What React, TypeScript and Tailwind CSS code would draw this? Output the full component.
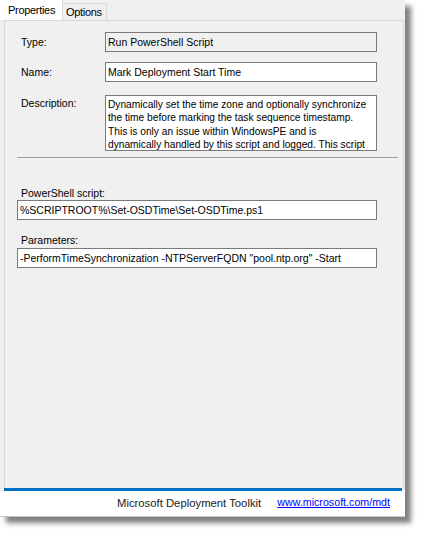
const Field = ({ children, className = '' }: { children: React.ReactNode; className?: string }) => (
  <div
    className={`h-[20px] border border-[#7a7a7a] pl-[2px] leading-[18px] whitespace-nowrap overflow-hidden ${className}`}
  >
    {children}
  </div>
);

const descriptionLines = [
  'Dynamically set the time zone and optionally synchronize',
  'the time before marking the task sequence timestamp.',
  'This is only an issue within WindowsPE and is',
  'dynamically handled by this script and logged. This script',
];

export default function App() {
  return (
    <div className="w-[421px] h-[533px] bg-white font-['Liberation_Sans',Arial,sans-serif] text-[10.5px] text-black">
      <div className="w-[405px] h-[517px] bg-[#f0f0f0] flex flex-col shadow-[6px_6px_5px_rgba(0,0,0,0.5)]">
        {/* tab strip */}
        <div className="h-[20px] flex items-end shrink-0">
          <div className="h-[20px] w-[63px] bg-white border-r border-[#d9d9d9] pl-[8px] text-[11px] tracking-[-0.3px] leading-[20px]">
            Properties
          </div>
          <div className="h-[17px] w-[44px] border-t border-r border-[#d9d9d9] pl-[3px] text-[11px] tracking-[-0.3px] leading-[17px]">
            Options
          </div>
        </div>

        {/* tab page */}
        <div className="ml-[4px] mr-[1px] flex-1 border-l border-r border-t border-[#d9d9d9] flex flex-col">
          <div className="pl-[16px] pt-[11px] grid grid-cols-[84px_272px] gap-y-[10px] leading-[13px]">
            <div className="self-center">Type:</div>
            <Field className="bg-[#f0f0f0]">Run PowerShell Script</Field>

            <div className="self-center">Name:</div>
            <Field className="bg-white">Mark Deployment Start Time</Field>

            <div className="mt-[3px] pt-[2px]">Description:</div>
            <div className="mt-[3px] h-[56px] border border-[#7a7a7a] bg-white pl-[2px] pt-[2px] leading-[13.3px] overflow-hidden">
              {descriptionLines.map((line) => (
                <div key={line} className="whitespace-nowrap text-[10.2px]">
                  {line}
                </div>
              ))}
            </div>
          </div>

          <div className="ml-[12px] w-[381px] mt-[6px] h-px bg-[#a0a0a0]" />

          <div className="pl-[12px] w-[372px] leading-[13px]">
            <div className="mt-[29px] pl-[4px]">PowerShell script:</div>
            <Field className="bg-white">%SCRIPTROOT%\Set-OSDTime\Set-OSDTime.ps1</Field>
            <div className="mt-[14px] pl-[4px]">Parameters:</div>
            <Field className="mt-[1px] bg-white">
              -PerformTimeSynchronization -NTPServerFQDN "pool.ntp.org" -Start
            </Field>
          </div>
        </div>

        {/* footer */}
        <div className="ml-[4px] mr-[3px] h-[3px] bg-[#0072c6] shrink-0" />
        <div className="h-[26px] bg-white border-b border-[#c8c8c8] flex items-center pl-[117px] gap-[16px] shrink-0">
          <span className="text-[11.3px] text-[#1a1a1a]">Microsoft Deployment Toolkit</span>
          <a href="#" className="text-[10.7px] text-[#0000ff] underline -mt-[3px]">
            www.microsoft.com/mdt
          </a>
        </div>
      </div>
    </div>
  );
}
